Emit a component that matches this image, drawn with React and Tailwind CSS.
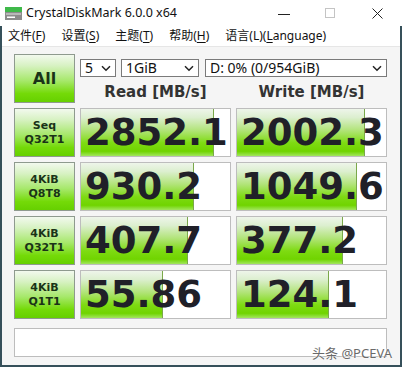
import React from "react";

const barBg =
  "bg-[linear-gradient(180deg,#eef5ea_0%,#dcefcf_18%,#b2e47a_45%,#7edb12_72%,#70d400_90%,#a2e65e_100%)]";
const btnBg =
  "bg-[linear-gradient(180deg,#f2f9ee_0%,#d8f2c4_22%,#a6e86a_55%,#74da08_82%,#66d000_100%)]";

function Label({ top, bottom }) {
  return (
    <div
      className={`flex flex-col items-center justify-center border border-[#8e9a8e] ${btnBg} font-['DejaVu_Sans',sans-serif] font-bold text-[11px] leading-[14px] text-[#1a3318]`}
    >
      <span>{top}</span>
      <span>{bottom}</span>
    </div>
  );
}

function Cell({ value, bar }) {
  return (
    <div className="relative overflow-hidden border border-[#bdbdbd] bg-white">
      <div
        className={`absolute inset-y-0 left-0 ${barBg} border-r border-[#7aa84a]`}
        style={{ width: bar }}
      />
      <div className="relative flex h-full items-center pl-[4px] font-['DejaVu_Sans',sans-serif] font-bold text-[37px] leading-none text-[#202028] whitespace-nowrap">
        {value}
      </div>
    </div>
  );
}

function Select({ w, text }) {
  return (
    <div
      className="flex h-[18px] items-center justify-between border border-[#7a7a7a] bg-white pl-[4px] pr-[4px] font-['Noto_Sans',sans-serif] text-[14px] leading-none text-[#111]"
      style={{ width: w }}
    >
      <span>{text}</span>
      <svg width="10" height="7" viewBox="0 0 10 7">
        <polyline points="1,1.2 5,5.2 9,1.2" fill="none" stroke="#222" strokeWidth="1.5" />
      </svg>
    </div>
  );
}

function U({ children }) {
  return <span className="underline underline-offset-2">{children}</span>;
}

export default function App() {
  const rows = [
    ["Seq", "Q32T1", "2852.1", 133, "2002.3", 128],
    ["4KiB", "Q8T8", "930.2", 113, "1049.6", 120],
    ["4KiB", "Q32T1", "407.7", 107, "377.2", 106],
    ["4KiB", "Q1T1", "55.86", 82, "124.1", 92],
  ];
  return (
    <div className="relative flex h-[367px] w-[402px] flex-col overflow-hidden bg-white">
      {/* title bar */}
      <div className="flex h-[26px] items-center">
        <svg className="ml-[5px]" width="17" height="13" viewBox="0 0 17 13">
          <rect x="0" y="0" width="17" height="5" fill="#3fb94a" />
          <rect x="0" y="5" width="17" height="8" fill="#8c8c8c" />
          <rect x="1" y="6" width="15" height="2" fill="#b8b8b8" />
          <rect x="2" y="9.5" width="8" height="1.5" fill="#ffffff" />
        </svg>
        <span className="ml-[4px] font-['Noto_Sans',sans-serif] text-[12.5px] text-[#111]">
          CrystalDiskMark 6.0.0 x64
        </span>
        <div className="ml-auto flex h-full items-center">
          <svg className="mr-[35px]" width="12" height="12" viewBox="0 0 12 12">
            <line x1="0" y1="7.5" x2="12" y2="7.5" stroke="#222" strokeWidth="1" />
          </svg>
          <svg className="mr-[37px]" width="10" height="10" viewBox="0 0 10 10">
            <rect x="0.5" y="0.5" width="9" height="9" fill="none" stroke="#c4c4c4" strokeWidth="1" />
          </svg>
          <svg className="mr-[19px]" width="11" height="11" viewBox="0 0 11 11">
            <line x1="0.5" y1="0.5" x2="10.5" y2="10.5" stroke="#222" strokeWidth="1" />
            <line x1="10.5" y1="0.5" x2="0.5" y2="10.5" stroke="#222" strokeWidth="1" />
          </svg>
        </div>
      </div>

      <div className="flex flex-1 flex-col border-x-2 border-b-2 border-[#36505a]">
        {/* menu */}
        <div className="flex h-[20px] items-center gap-[16px] pl-[6px] font-['Noto_Sans','Noto_Sans_CJK_SC',sans-serif] text-[12px] leading-none text-[#111]">
          <span>文件(<U>F</U>)</span>
          <span>设置(<U>S</U>)</span>
          <span>主题(<U>T</U>)</span>
          <span>帮助(<U>H</U>)</span>
          <span>语言(L)(<U>L</U>anguage)</span>
        </div>
        <div className="h-px bg-[#e6e6e6]" />

        {/* body */}
        <div className="flex flex-1 flex-col bg-[#f5f5f5] pl-[12px] pt-[7px]">
          <div className="grid grid-cols-[61px_151px_151px] grid-rows-[49px_49px_49px_49px_49px] gap-[5px]">
            <div
              className={`flex items-center justify-center border border-[#8e9a8e] ${btnBg} font-['DejaVu_Sans',sans-serif] font-bold text-[16px] text-[#1a3318]`}
            >
              All
            </div>
            <div className="col-span-2 flex flex-col pt-[5px]">
              <div className="flex gap-[5px]">
                <Select w={36} text="5" />
                <Select w={78} text="1GiB" />
                <div className="ml-px">
                  <Select w={182} text="D: 0% (0/954GiB)" />
                </div>
              </div>
              <div className="mt-[8px] grid grid-cols-[151px_151px] gap-[5px] font-['DejaVu_Sans',sans-serif] font-bold text-[15px] leading-none text-[#333]">
                <div className="text-center">Read [MB/s]</div>
                <div className="text-center">Write [MB/s]</div>
              </div>
            </div>
            {rows.map((r, i) => (
              <React.Fragment key={i}>
                <Label top={r[0]} bottom={r[1]} />
                <Cell value={r[2]} bar={r[3]} />
                <Cell value={r[4]} bar={r[5]} />
              </React.Fragment>
            ))}
          </div>
          <div className="mt-[9px] h-[29px] w-[373px] border border-[#bdbdbd] bg-white" />
        </div>
      </div>

      <div className="absolute bottom-[7px] right-[10px] font-['Noto_Sans','Noto_Sans_CJK_SC',sans-serif] text-[13px] leading-none text-[#6a6a6a] [text-shadow:0_0_2px_#fff,0_0_2px_#fff]">
        头条 @PCEVA
      </div>
    </div>
  );
}
